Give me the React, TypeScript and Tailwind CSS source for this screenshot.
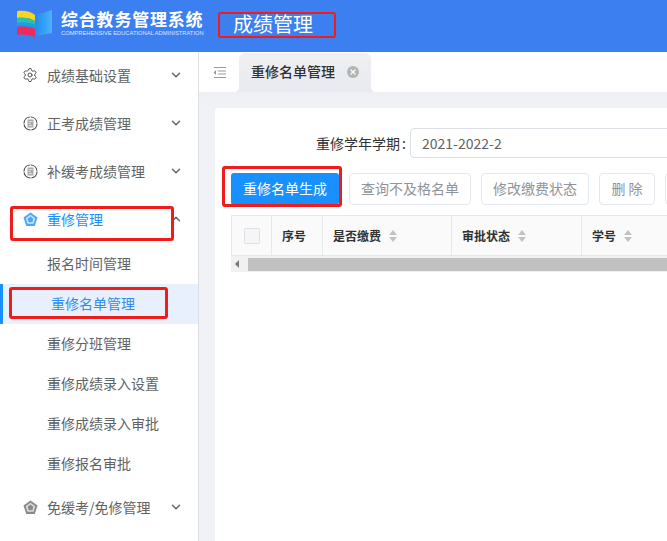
import React from 'react';
import { ChevronDown, ChevronUp, Settings } from 'lucide-react';

const RoundDocIcon = () => (
  <svg width="15" height="15" viewBox="0 0 15 15" fill="none" className="shrink-0">
    <circle cx="7.500" cy="7.500" r="6.500" stroke="#444" strokeWidth="1.100" strokeDasharray="9 1" />
    <rect x="4.500" y="3.500" width="6" height="8" fill="#a8a8a8" />
    <path d="M5.500 5.500h4M5.500 7.500h2.500M5.500 9.500h4" stroke="#eee" strokeWidth="0.800" />
  </svg>
);

const PentagonIcon = ({ color, inner }: { color: string; inner: string }) => (
  <svg width="15" height="15" viewBox="0 0 15 15" fill="none" className="shrink-0">
    <path d="M7.500 .5 14.500 5.600 11.800 14H3.200L.5 5.600Z" fill={color} />
    <path d="M7.500 2.800 12.200 6.200 10.500 11.800H4.500L2.800 6.200Z" fill={inner} />
    <path d="M7.500 4.600 10.400 6.800 9.400 10.300H5.600L4.600 6.800Z" fill={color} />
  </svg>
);

const Logo = () => (
  <svg width="35" height="28" viewBox="0 0 35 28" fill="none" className="mb-[4px] shrink-0">
    <defs>
      <linearGradient id="page" x1="0" y1="0" x2="1" y2="0">
        <stop offset="0" stopColor="#1f8cf0" />
        <stop offset="1" stopColor="#4db2fb" />
      </linearGradient>
    </defs>
    <path d="M18 5C23 4 29 2 35 0V23C29 24 23 25 18 27Z" fill="url(#page)" />
    <path d="M0 1C7 0 14 1 18 5V11C14 8 7 7 0 8Z" fill="#f8d423" />
    <path d="M0 8C7 7 14 8 18 11V15C14 13 7 12 0 13Z" fill="#2bc0b4" />
    <path d="M0 13C7 12 14 13 18 15V18C14 16 7 15 0 16Z" fill="#1f9fd8" />
    <path d="M0 17C7 16 14 17 18 19V27C14 25 7 24 0 25Z" fill="#f0285c" />
  </svg>
);

const SortIcon = () => (
  <span className="ml-[8px] flex flex-col gap-[2px]">
    <span className="h-0 w-0 border-x-[4px] border-b-[5px] border-x-transparent border-b-[#c2c2c2]" />
    <span className="h-0 w-0 border-x-[4px] border-t-[5px] border-x-transparent border-t-[#c2c2c2]" />
  </span>
);

const subMenus = ['报名时间管理', '重修名单管理', '重修分班管理', '重修成绩录入设置', '重修成绩录入审批', '重修报名审批'];

const MenuRow = ({ icon, label }: { icon: React.ReactNode; label: string }) => (
  <div className="flex h-12 items-center pb-[2px] pl-[22px] pr-[15px] text-[14px] text-[#606266]">
    <span className="mr-[9px] flex w-4 justify-center">{icon}</span>
    <span className="flex-1">{label}</span>
    <ChevronDown size={14} strokeWidth={2.5} className="text-[#666]" />
  </div>
);

const App = () => {
  return (
    <div className="flex h-[541px] w-[667px] flex-col overflow-hidden bg-white font-['Noto_Sans_CJK_SC',sans-serif]">
      <header className="flex h-[52px] shrink-0 items-center bg-[#3b7ff0] pl-[17px]">
        <Logo />
        <div className="mb-[6px] ml-[9px] w-[144px] text-white">
          <div className="text-[17px] font-bold leading-[20px] tracking-[0.8px] whitespace-nowrap">综合教务管理系统</div>
          <div className="mt-[1px] origin-left scale-x-[0.96] font-['Liberation_Sans',sans-serif] text-[6px] leading-[7px] whitespace-nowrap text-[#dbe8ff]">
            COMPREHENSIVE EDUCATIONAL ADMINISTRATION
          </div>
        </div>
        <div className="mb-[2px] ml-[13px] flex h-[26px] w-[118px] items-center rounded-[3px] border-[2.500px] border-[#f01b1b] pb-[2px] pl-[13px] text-[20px] text-white">
          成绩管理
        </div>
      </header>

      <div className="flex min-h-0 flex-1">
        <aside className="w-[199px] shrink-0 border-r border-[#dcdfe6] bg-white">
          <MenuRow icon={<Settings size={16} strokeWidth={1.500} className="text-[#555]" />} label="成绩基础设置" />
          <MenuRow icon={<RoundDocIcon />} label="正考成绩管理" />
          <MenuRow icon={<RoundDocIcon />} label="补缓考成绩管理" />
          <div className="relative flex h-12 items-center pb-[2px] pl-[22px] pr-[15px] text-[14px] text-[#1890ff]">
            <span className="mr-[9px] flex w-4 justify-center">
              <PentagonIcon color="#4aa8f5" inner="#cfe6fc" />
            </span>
            <span className="flex-1">重修管理</span>
            <ChevronUp size={14} strokeWidth={2.500} className="text-[#666]" />
            <span className="absolute left-[10px] top-[10px] h-[35px] w-[164px] rounded-[3px] border-[3px] border-[#f01b1b]" />
          </div>
          {subMenus.map((item, i) =>
            i === 1 ? (
              <div key={item} className="relative flex h-10 items-center border-l-[3px] border-[#1890ff] bg-[#e8f0fd] pb-[2px] pl-[48px] text-[14px] text-[#2f8cf5]">
                {item}
                <span className="absolute left-[6px] top-[3px] h-[32px] w-[159px] rounded-[3px] border-[3px] border-[#f01b1b]" />
              </div>
            ) : (
              <div key={item} className="flex h-10 items-center pb-[2px] pl-[47px] text-[14px] text-[#606266]">
                {item}
              </div>
            ),
          )}
          <MenuRow icon={<PentagonIcon color="#8a8a8a" inner="#dedede" />} label="免缓考/免修管理" />
        </aside>

        <main className="flex min-w-0 flex-1 flex-col bg-gradient-to-b from-[#e9ebf0] to-[#f0f2f5] to-[60px]">
          <div className="flex h-10 shrink-0 items-end bg-white">
            <div className="flex h-10 w-10 items-center justify-center">
              <svg width="13" height="11" viewBox="0 0 13 11" fill="none">
                <path d="M1 .5h12M5 4h8M5 7h8M1 10.500h12" stroke="#999" strokeWidth="1" />
                <path d="M3 3 .5 5.500 3 8Z" fill="#999" />
              </svg>
            </div>
            <div className="relative flex h-[39px] w-[132px] items-center rounded-t-[6px] bg-gradient-to-b from-[#eff0f3] to-[#e8eaef] pb-[2px] pl-[12px] text-[14px] font-medium text-[#303133]">
              <span className="absolute bottom-0 left-[-3px] h-0 w-0 border-b-[3px] border-l-[3px] border-b-[#e8eaef] border-l-transparent" />
              <span className="absolute bottom-0 right-[-3px] h-0 w-0 border-b-[3px] border-r-[3px] border-b-[#e8eaef] border-r-transparent" />
              重修名单管理
              <span className="ml-[12px] flex h-3 w-3 items-center justify-center rounded-full bg-[#b4b4b4]">
                <svg width="6" height="6" viewBox="0 0 6 6">
                  <path d="M.5.500l5 5M5.500.500l-5 5" stroke="#fff" strokeWidth="1.100" />
                </svg>
              </span>
            </div>
          </div>

          <div className="min-h-0 flex-1 overflow-hidden pl-4 pt-4">
            <div className="h-full w-[600px] rounded-t-[4px] bg-white pl-4 pt-5">
              <div className="flex h-[30px] items-center">
                <span className="w-[179px] pr-[4px] text-right text-[14px] text-[#303133]">
                  重修学年学期<span className="ml-[2px]">:</span>
                </span>
                <div className="flex h-[30px] flex-1 items-center rounded-l-[4px] border border-[#dcdfe6] pl-[11px] text-[14px] text-[#606266]">
                  2021-2022-2
                </div>
              </div>

              <div className="mt-[15px] flex h-[32px] items-center gap-[10px] text-[14px]">
                <div className="relative h-[32px] w-[108px] shrink-0">
                  <button className="h-[32px] w-[108px] rounded-[3px] bg-[#1890ff] pb-[2px] text-white">重修名单生成</button>
                  <span className="pointer-events-none absolute left-[-9px] top-[-7px] h-[41px] w-[120px] rounded-[3px] border-[3px] border-[#f01b1b]" />
                </div>
                <button className="h-[32px] w-[122px] shrink-0 rounded-[4px] border border-[#e4e7ed] pb-[2px] text-[#909399]">查询不及格名单</button>
                <button className="h-[32px] w-[108px] shrink-0 rounded-[4px] border border-[#e4e7ed] pb-[2px] text-[#909399]">修改缴费状态</button>
                <button className="h-[32px] w-[56px] shrink-0 rounded-[4px] border border-[#e4e7ed] pb-[2px] text-[#909399]">删 除</button>
                <button className="h-[32px] w-[56px] shrink-0 rounded-[4px] border border-[#e4e7ed]" />
              </div>

              <div className="mt-[10px] border-t border-[#e8e8e8]">
                <div className="flex h-10 border-b border-[#e8e8e8] bg-[#fafafa] text-[12px] font-bold text-[#303133]">
                  <div className="flex w-[41px] items-center justify-center border-x border-[#e8e8e8]">
                    <span className="h-4 w-4 rounded-[2px] border border-[#dcdfe6] bg-[#f5f5f5]" />
                  </div>
                  <div className="flex w-[51px] items-center border-r border-[#e8e8e8] pl-[10px]">序号</div>
                  <div className="flex w-[129px] items-center border-r border-[#e8e8e8] pl-[10px]">
                    是否缴费
                    <SortIcon />
                  </div>
                  <div className="flex w-[130px] items-center border-r border-[#e8e8e8] pl-[10px]">
                    审批状态
                    <SortIcon />
                  </div>
                  <div className="flex flex-1 items-center pl-[10px]">
                    学号
                    <SortIcon />
                  </div>
                </div>
                <div className="flex h-4 items-center bg-[#f1f1f1]">
                  <span className="ml-[4px] h-0 w-0 border-y-[4px] border-r-[4px] border-y-transparent border-r-[#777]" />
                  <span className="ml-[9px] h-[13px] flex-1 bg-[#c1c1c1]" />
                </div>
              </div>
            </div>
          </div>
        </main>
      </div>
    </div>
  );
};

export default App;
